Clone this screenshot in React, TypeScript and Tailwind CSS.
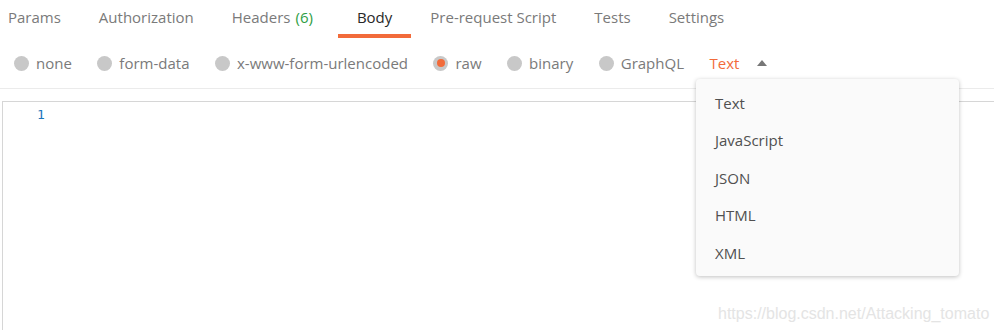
import React from 'react'

/**
 * Request body editor — tabs, body type radios, raw editor and
 * the open language dropdown.
 */

const TABS = [
  { label: 'Params' },
  { label: 'Authorization' },
  { label: 'Headers', count: '(6)' },
  { label: 'Body', active: true },
  { label: 'Pre-request Script' },
  { label: 'Tests' },
  { label: 'Settings' },
]

const BODY_TYPES = ['none', 'form-data', 'x-www-form-urlencoded', 'raw', 'binary', 'GraphQL']

const LANGS = ['Text', 'JavaScript', 'JSON', 'HTML', 'XML']

function Radio({ checked }: { checked?: boolean }) {
  return (
    <span className="w-[15px] h-[15px] rounded-full bg-[#c8c8c8] flex items-center justify-center shrink-0">
      {checked && <span className="w-[8px] h-[8px] rounded-full bg-[#f26b3a]" />}
    </span>
  )
}

export default function App() {
  return (
    <div className="relative w-[994px] h-[330px] bg-white overflow-hidden font-['Open_Sans',sans-serif]">

      {/* Tabs */}
      <div className="flex h-[38px]">
        {TABS.map((t, i) => (
          <div
            key={t.label}
            className={`flex items-center h-full pt-[1px] text-[15px] border-b-4 ${
              i === 0 ? 'pl-2 pr-[19px]' : 'px-[19px]'
            } ${t.active ? 'border-[#f26b3a] text-[#282828]' : 'border-transparent text-[#7a7a7a]'}`}
          >
            {t.label}
            {t.count && <span className="ml-[5px] mr-[6px] text-[#2f9e44]">{t.count}</span>}
          </div>
        ))}
      </div>

      {/* Body types */}
      <div className="flex items-center h-[51px] pl-[14px] border-b border-[#ebebeb] text-[15px]">
        {BODY_TYPES.map(b => (
          <div key={b} className="flex items-center gap-[7px] mr-[25.5px]">
            <Radio checked={b === 'raw'} />
            <span className="text-[#7a7a7a]">{b}</span>
          </div>
        ))}
        <span className="text-[#f26b3a]">Text</span>
        <svg width="10" height="6" viewBox="0 0 10 6" className="ml-[18px]">
          <path d="M0 6 L5 0 L10 6 Z" fill="#777" />
        </svg>
      </div>

      {/* Editor */}
      <div className="ml-[2px] mt-[12px] h-[300px] border-l border-t border-[#d6d6d6]">
        <div className="pl-[34px] pt-[3px] font-['DejaVu_Sans_Mono',monospace] text-[13px] text-[#1b75bb]">1</div>
      </div>

      {/* Language dropdown */}
      <div className="absolute left-[696px] top-[79px] w-[263px] h-[197px] py-[5px] bg-[#fafafa] rounded-[4px] shadow-[0_1px_4px_rgba(0,0,0,0.25)]">
        {LANGS.map(l => (
          <div key={l} className="h-[37.5px] flex items-center pl-[19px] text-[15px] text-[#505050]">
            {l}
          </div>
        ))}
      </div>

      {/* Watermark */}
      <div className="absolute left-[718px] top-[302px] text-[16px] text-[#e4e4e4] font-['Liberation_Sans',sans-serif]">
        https://blog.csdn.net/Attacking_tomato
      </div>
    </div>
  )
}
